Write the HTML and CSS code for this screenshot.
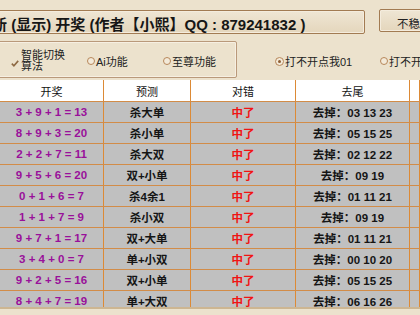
FILE: index.html
```html
<!DOCTYPE html>
<html>
<head>
<meta charset="utf-8">
<link rel="stylesheet" href="styles.css">
</head>
<body>
<div class="top">
  <div class="title"><span class="title-text">新 (显示) 开奖 (作者【小熙】QQ : 879241832 )</span></div>
  <div class="btn">不稳定</div>
</div>
<div class="row2">
  <div class="group">
    <div class="opt opt-chk">
      <svg class="chk" width="8" height="7" viewBox="0 0 8 7"><path d="M0.8 3.6 L2.9 5.8 L7.2 0.9" fill="none" stroke="#8e6a44" stroke-width="1.6"/></svg>
      <span class="two">智能切换<br>算法</span>
    </div>
    <div class="opt opt-ai"><span class="radio"></span><span>Ai功能</span></div>
    <div class="opt"><span class="radio"></span><span>至尊功能</span></div>
  </div>
  <div class="opt opt-r1"><span class="radio on"></span><span>打不开点我01</span></div>
  <div class="opt"><span class="radio"></span><span>打不开点我02</span></div>
</div>
<div class="table">
  <div class="tr th"><div>开奖</div><div>预测</div><div>对错</div><div>去尾</div><div></div></div>
  <div class="tr"><div class="p">3 + 9 + 1 = 13</div><div class="b">杀大单</div><div class="r">中了</div><div class="b">去掉：03 13 23</div><div></div></div>
  <div class="tr"><div class="p">8 + 9 + 3 = 20</div><div class="b">杀小单</div><div class="r">中了</div><div class="b">去掉：05 15 25</div><div></div></div>
  <div class="tr"><div class="p">2 + 2 + 7 = 11</div><div class="b">杀大双</div><div class="r">中了</div><div class="b">去掉：02 12 22</div><div></div></div>
  <div class="tr"><div class="p">9 + 5 + 6 = 20</div><div class="b">双+小单</div><div class="r">中了</div><div class="b">去掉：09 19</div><div></div></div>
  <div class="tr"><div class="p">0 + 1 + 6 = 7</div><div class="b">杀4余1</div><div class="r">中了</div><div class="b">去掉：01 11 21</div><div></div></div>
  <div class="tr"><div class="p">1 + 1 + 7 = 9</div><div class="b">杀小双</div><div class="r">中了</div><div class="b">去掉：09 19</div><div></div></div>
  <div class="tr"><div class="p">9 + 7 + 1 = 17</div><div class="b">双+大单</div><div class="r">中了</div><div class="b">去掉：01 11 21</div><div></div></div>
  <div class="tr"><div class="p">3 + 4 + 0 = 7</div><div class="b">单+小双</div><div class="r">中了</div><div class="b">去掉：00 10 20</div><div></div></div>
  <div class="tr"><div class="p">9 + 2 + 5 = 16</div><div class="b">双+小单</div><div class="r">中了</div><div class="b">去掉：05 15 25</div><div></div></div>
  <div class="tr"><div class="p">8 + 4 + 7 = 19</div><div class="b">单+大双</div><div class="r">中了</div><div class="b">去掉：06 16 26</div><div></div></div>
</div>
</body>
</html>
```
FILE: styles.css
```css
html, body {
  margin: 0;
  padding: 0;
}
body {
  width: 420px;
  height: 315px;
  overflow: hidden;
  background: #ece2cd;
  font-family: "Liberation Sans", "Noto Sans CJK SC", sans-serif;
  color: #1a1a1a;
}
.top {
  display: flex;
  align-items: flex-start;
  padding-top: 9px;
  height: 25px;
}
.title {
  margin-left: -6px;
  margin-top: 1px;
  width: 371px;
  height: 24px;
  box-sizing: border-box;
  border: 1px solid #a27b52;
  border-radius: 2px;
  box-shadow: inset 0 0 0 1px #f4ecdd;
  background: linear-gradient(#efe6d4, #e4d6bc);
  display: flex;
  align-items: center;
  overflow: hidden;
  flex: none;
}
.title-text {
  margin-left: -3px;
  margin-top: 2px;
  font-size: 15px;
  font-weight: bold;
  white-space: pre;
  color: #161616;
}
.btn {
  margin-left: 14px;
  width: 70px;
  height: 23px;
  box-sizing: border-box;
  border: 1px solid #a27b52;
  border-radius: 2px;
  box-shadow: inset 0 0 0 1px #f4ecdd;
  background: linear-gradient(#efe6d4, #e4d6bc);
  font-size: 11.5px;
  padding-left: 17px;
  padding-top: 5px;
  white-space: nowrap;
  flex: none;
  color: #222;
}
.row2 {
  display: flex;
  align-items: center;
  margin-top: 7px;
  height: 37px;
  font-size: 11px;
  color: #222;
}
.group {
  margin-left: -6px;
  width: 243px;
  height: 37px;
  box-sizing: border-box;
  border: 1px solid #b9997a;
  border-radius: 2px;
  box-shadow: inset 0 0 0 1px #f6efe2;
  display: flex;
  align-items: center;
  padding-left: 16px;
  padding-top: 3px;
  flex: none;
}
.opt {
  display: flex;
  align-items: center;
  white-space: nowrap;
  flex: none;
}
.opt-chk {
  width: 76px;
}
.chk {
  margin-right: 2px;
  margin-top: 4px;
}
.two {
  line-height: 11px;
}
.opt-ai {
  width: 76px;
}
.opt-r1 {
  margin-left: 38px;
  width: 105px;
  padding-top: 3px;
}
.row2 > .opt:last-child {
  padding-top: 3px;
}
.radio {
  width: 8px;
  height: 8px;
  box-sizing: border-box;
  border: 1.5px solid #b7875a;
  border-radius: 50%;
  margin-right: 1px;
  background: #f3ead9;
  display: flex;
  align-items: center;
  justify-content: center;
}
.radio.on {
  width: 9px;
  height: 9px;
}
.radio.on::after {
  content: "";
  width: 3px;
  height: 3px;
  border-radius: 50%;
  background: #8e5f34;
}
.table {
  margin-top: 2px;
  height: 229px;
  overflow: hidden;
  border-bottom: 2px solid #cdb692;
  box-sizing: border-box;
}
.tr {
  display: grid;
  grid-template-columns: 104px 87px 105px 114px 1fr;
  height: 21px;
  box-sizing: border-box;
  border-bottom: 1px solid #d28c48;
  background: #c0c0c0;
  font-size: 11.5px;
  font-weight: bold;
}
.tr > div {
  border-right: 1px solid #dc8a36;
  display: flex;
  align-items: center;
  justify-content: center;
  white-space: nowrap;
}
.th {
  height: 22px;
  background: #ffffff;
  font-weight: normal;
  font-size: 11px;
  color: #111;
}
.p {
  color: #99109a;
}
.r {
  color: #f01414;
}
.b {
  color: #151515;
}
```
